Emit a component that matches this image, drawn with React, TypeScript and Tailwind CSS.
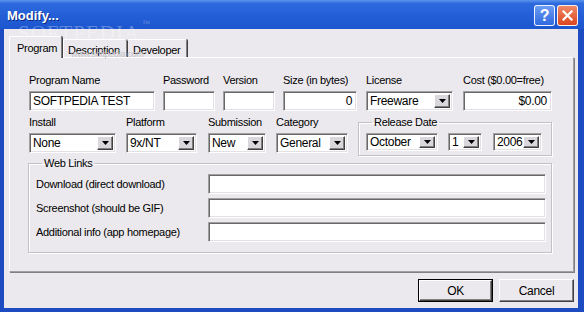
import React from 'react';

// Classic 3D borders, reused by every field and button
const sunken =
    "border border-t-[#a0a0a0] border-l-[#a0a0a0] border-b-white border-r-white shadow-[inset_1px_1px_0_#696969,inset_-1px_-1px_0_#e2e0e4]";
const raised =
    "border border-t-white border-l-white border-b-[#404040] border-r-[#404040] shadow-[inset_-1px_-1px_0_#808080]";
const etched =
    "border border-[#c3c1c5] shadow-[inset_1px_1px_0_#ffffff,1px_1px_0_#ffffff]";

const TextBox: React.FC<{ value?: string; className: string; right?: boolean }> = ({ value, className, right }) => (
    <div
        className={`${sunken} bg-white h-[20px] flex items-center px-[3px] text-[12px] tracking-[-0.3px] ${right ? "justify-end pr-[4px]" : ""} ${className}`}
    >
        {value}
    </div>
);

const Combo: React.FC<{ value: string; className: string; h?: string }> = ({ value, className, h = "h-[20px]" }) => (
    <div className={`${sunken} bg-white ${h} flex items-center justify-between p-[2px] pl-[3px] text-[12px] tracking-[-0.3px] ${className}`}>
        <span className="leading-none">{value}</span>
        <div className={`${raised} bg-[#d9d7dc] w-[16px] h-full flex items-center justify-center`}>
            <svg width="7" height="4" viewBox="0 0 7 4">
                <polygon points="0,0 7,0 3.5,4" fill="#000" />
            </svg>
        </div>
    </div>
);

const Label: React.FC<{ children: React.ReactNode }> = ({ children }) => (
    <div className="h-[13px] leading-[13px] mb-[4px] whitespace-nowrap">{children}</div>
);

export default function App() {
    return (
        <div className="w-[584px] h-[312px] flex flex-col bg-[#1d4cc2] font-['Liberation_Sans',Arial,sans-serif] text-[11px] tracking-[-0.3px] text-black overflow-hidden relative">
            {/* Title bar */}
            <div className="h-[29px] flex items-center justify-between pl-[7px] pr-[6px] pt-[2px] bg-[linear-gradient(to_bottom,#5b95ee_0%,#2e6ade_12%,#245fd8_50%,#1c56cf_100%)]">
                <span className="text-white font-bold text-[13px] tracking-normal [text-shadow:1px_1px_0_#0f2a80]">Modify...</span>
                <div className="flex gap-[2px]">
                    <div className="w-[21px] h-[21px] rounded-[3px] border border-white/90 bg-[linear-gradient(to_bottom,#6d9cf2,#2f68e0)] flex items-center justify-center text-white font-bold text-[16px] leading-none">
                        ?
                    </div>
                    <div className="w-[21px] h-[21px] rounded-[3px] border border-white/90 bg-[linear-gradient(to_bottom,#f08a68,#d9451d)] flex items-center justify-center">
                        <svg width="11" height="11" viewBox="0 0 11 11">
                            <path d="M1.5 1.5 L9.5 9.5 M9.5 1.5 L1.5 9.5" stroke="#fff" strokeWidth="2.2" strokeLinecap="square" />
                        </svg>
                    </div>
                </div>
            </div>

            {/* Window body */}
            <div className="flex-1 ml-[4px] mr-[6px] mb-[4px] bg-[#ebe9ed] flex flex-col pt-[7px] pl-[5px] pr-[4px] pb-[6px]">
                {/* Tabs */}
                <div className="h-[21px] flex items-end">
                    <div className="relative z-10 -mb-px h-[22px] w-[53px] bg-[#ebe9ed] border-t border-l border-white border-r border-r-[#808080] rounded-t-[2px] pl-[7px] pt-[3px] shadow-[1px_0_0_#404040]">
                        Program
                    </div>
                    <div className="h-[18px] w-[64px] ml-[1px] border-t border-l border-white border-r border-r-[#808080] rounded-t-[2px] pl-[4px] pt-[2px] shadow-[1px_0_0_#404040]">
                        Description
                    </div>
                    <div className="h-[18px] w-[60px] border-t border-white border-r border-r-[#808080] rounded-t-[2px] pl-[6px] pt-[2px] shadow-[1px_0_0_#404040]">
                        Developer
                    </div>
                </div>

                {/* Tab panel */}
                <div className="flex-1 border-t border-l border-white border-r border-b border-r-[#a0a0a0] border-b-[#a0a0a0] shadow-[1px_1px_0_#808080] pl-[18px] pt-[16px]">
                    {/* Row 1 */}
                    <div className="flex items-start ml-px">
                        <div>
                            <Label>Program Name</Label>
                            <TextBox className="w-[126px]" value="SOFTPEDIA TEST" />
                        </div>
                        <div className="ml-[8px]">
                            <Label>Password</Label>
                            <TextBox className="w-[52px]" />
                        </div>
                        <div className="ml-[8px]">
                            <Label>Version</Label>
                            <TextBox className="w-[52px]" />
                        </div>
                        <div className="ml-[8px]">
                            <Label>Size (in bytes)</Label>
                            <TextBox className="w-[74px]" value="0" right />
                        </div>
                        <div className="ml-[9px]">
                            <Label>License</Label>
                            <Combo className="w-[87px]" value="Freeware" />
                        </div>
                        <div className="ml-[10px]">
                            <Label>Cost ($0.00=free)</Label>
                            <TextBox className="w-[89px]" value="$0.00" right />
                        </div>
                    </div>

                    {/* Row 2 */}
                    <div className="flex items-start ml-px mt-[5px]">
                        <div>
                            <Label>Install</Label>
                            <Combo className="w-[87px]" value="None" />
                        </div>
                        <div className="ml-[10px]">
                            <Label>Platform</Label>
                            <Combo className="w-[71px]" value="9x/NT" />
                        </div>
                        <div className="ml-[11px]">
                            <Label>Submission</Label>
                            <Combo className="w-[58px]" value="New" />
                        </div>
                        <div className="ml-[10px]">
                            <Label>Category</Label>
                            <Combo className="w-[72px]" value="General" />
                        </div>
                        <fieldset className={`ml-[10px] w-[194px] h-[40px] ${etched} pl-[7px] pt-[4px]`}>
                            <legend className="ml-[6px] px-[2px] h-[13px] leading-[13px]">Release Date</legend>
                            <div className="flex">
                                <Combo className="w-[72px]" h="h-[18px]" value="October" />
                                <Combo className="w-[34px] ml-[10px]" h="h-[18px]" value="1" />
                                <Combo className="w-[49px] ml-[11px]" h="h-[18px]" value="2006" />
                            </div>
                        </fieldset>
                    </div>

                    {/* Web links */}
                    <fieldset className={`mt-[1px] w-[524px] h-[96px] ${etched} pl-[7px] pt-[4px]`}>
                        <legend className="ml-[6px] px-[2px] h-[13px] leading-[13px]">Web Links</legend>
                        <div className="grid grid-cols-[172px_338px] gap-y-[4px] items-center">
                            <span>Download (direct download)</span>
                            <TextBox className="w-[338px]" />
                            <span>Screenshot (should be GIF)</span>
                            <TextBox className="w-[338px]" />
                            <span>Additional info (app homepage)</span>
                            <TextBox className="w-[338px]" />
                        </div>
                    </fieldset>
                </div>

                {/* Dialog buttons */}
                <div className="mt-[7px] flex justify-end gap-[6px]">
                    <div className="w-[75px] h-[23px] border border-black">
                        <div className={`${raised} h-full flex items-center justify-center bg-[#ebe9ed] text-[12px]`}>OK</div>
                    </div>
                    <div className={`${raised} w-[75px] h-[23px] flex items-center justify-center bg-[#ebe9ed] text-[12px]`}>Cancel</div>
                </div>
            </div>

            {/* Watermark over the title bar */}
            <div className="absolute left-[18px] top-[18px] text-[21px] font-['Liberation_Serif',serif] tracking-[1px] text-white/30 pointer-events-none">
                SOFTPEDIA<span className="text-[8px] align-top ml-[2px]">™</span>
            </div>
            <div className="absolute left-[71px] top-[48px] text-[9px] text-[#c4c2c6] pointer-events-none">www.softpedia.com</div>
        </div>
    );
}
